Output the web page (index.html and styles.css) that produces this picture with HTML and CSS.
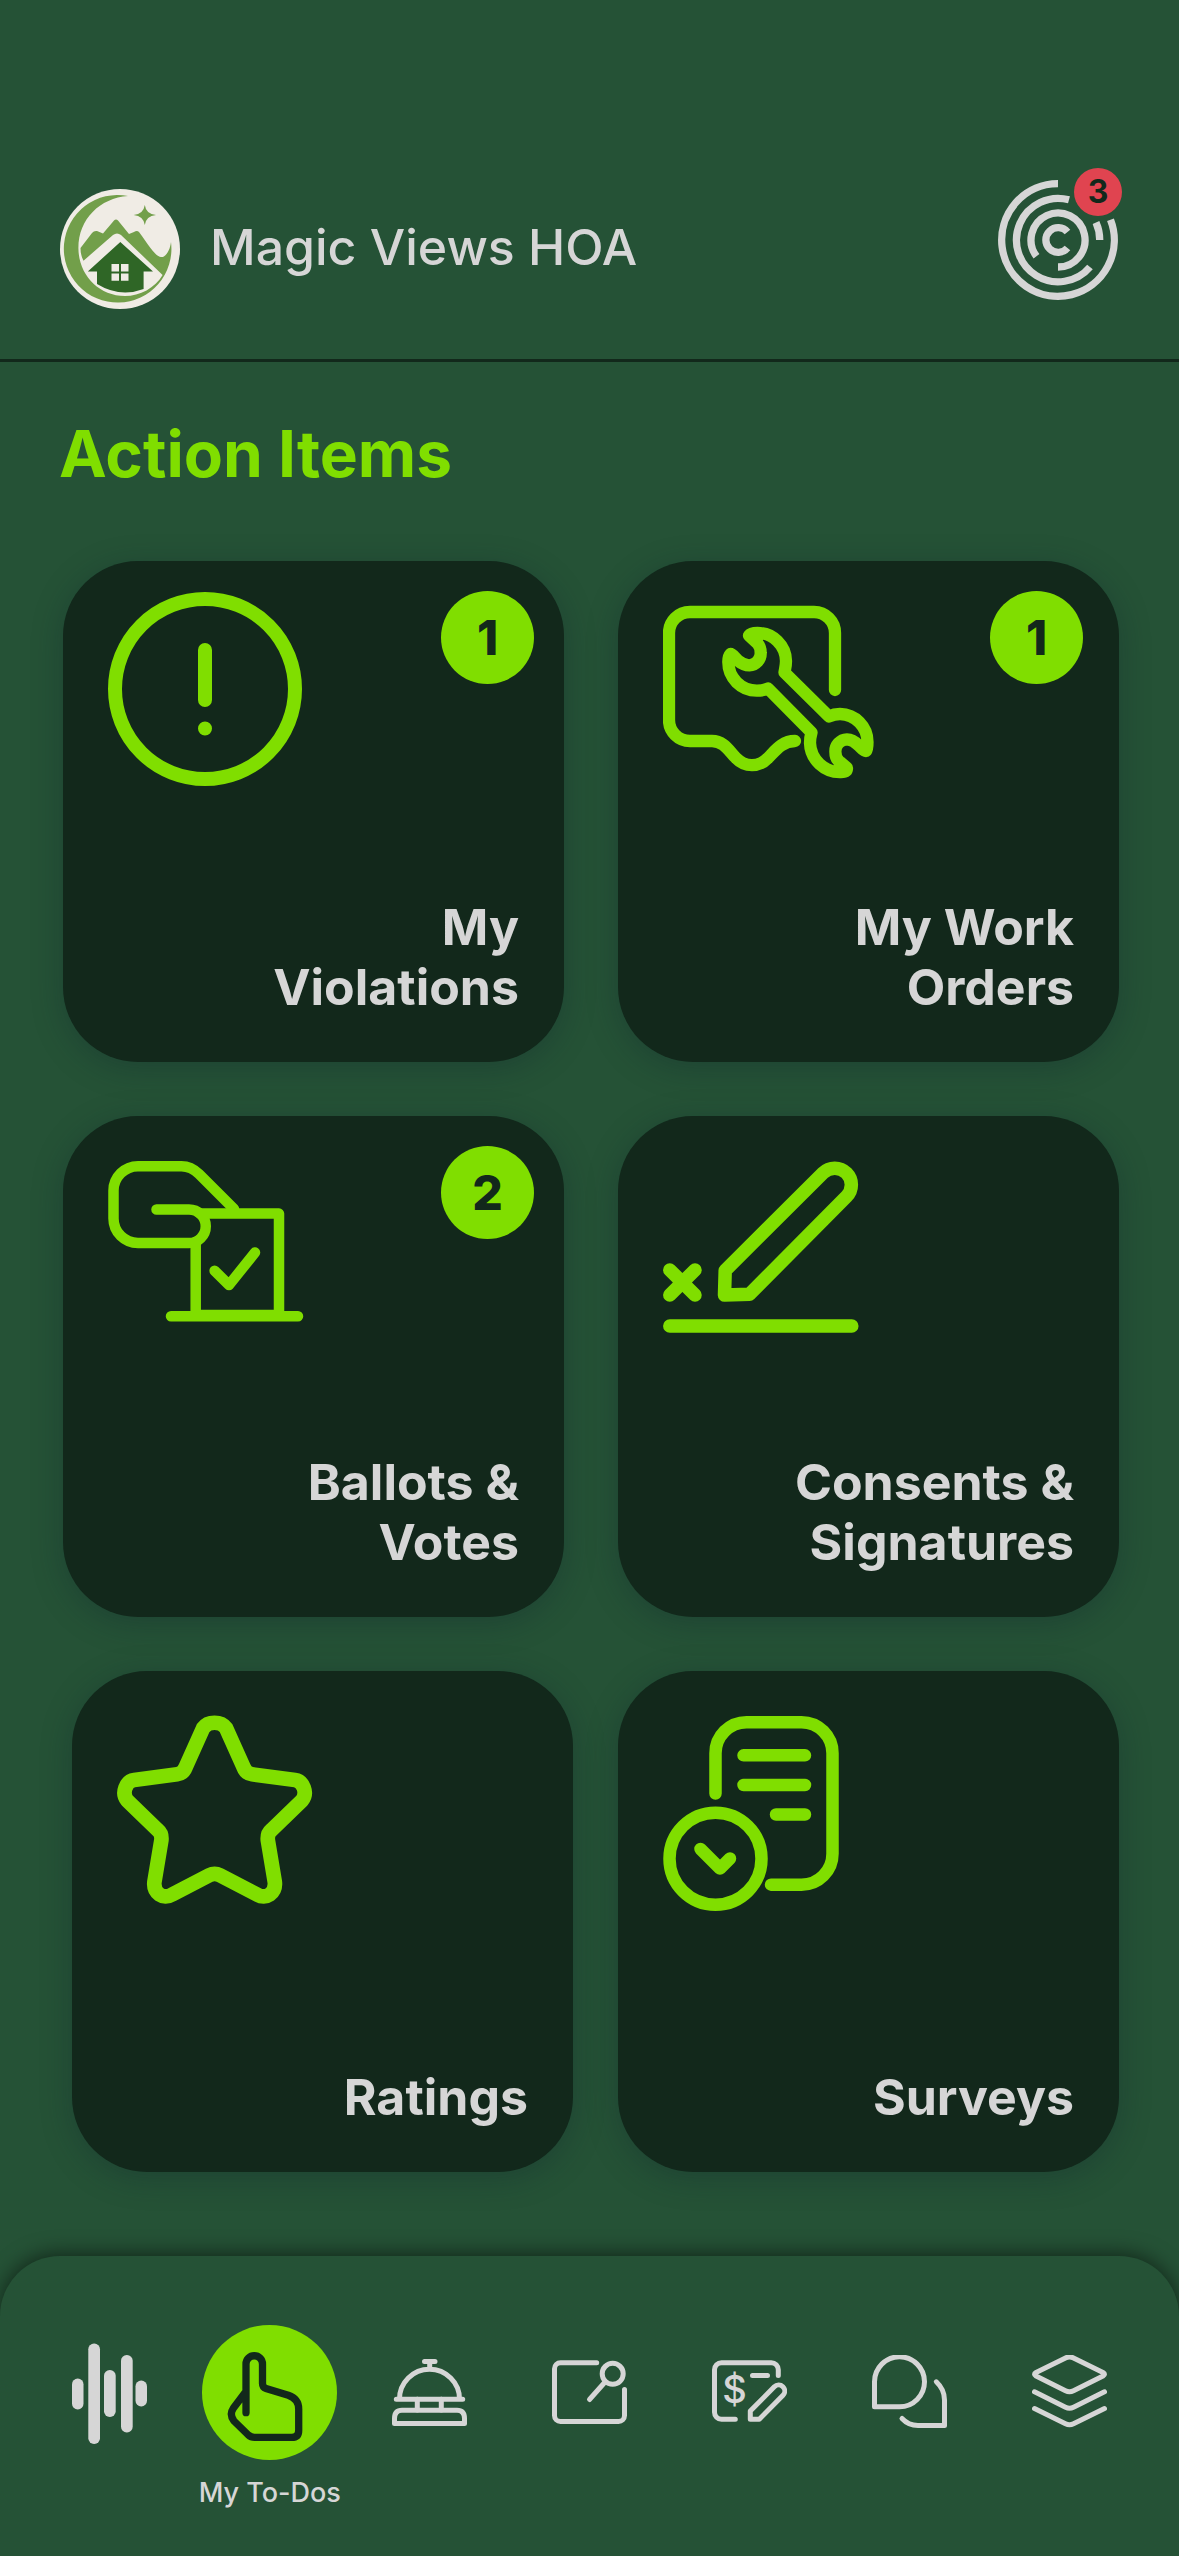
FILE: index.html
```html
<!DOCTYPE html>
<html lang="en">
<head>
    <meta charset="UTF-8">
    <meta name="viewport" content="width=device-width, initial-scale=1">
    <title>My To-Dos</title>
    <link rel="stylesheet" href="styles.css">
</head>
<body>
<header class="header">
    <div class="brand">
        <svg class="brand-logo" viewBox="0 0 120 120" aria-hidden="true">
            <circle cx="60" cy="60" r="60" fill="#f0ece5"/>
            <path fill="#729f4a" d="M68 7A53.8 53.8 0 1 0 111 53C110 62 105 69 101 68C95 67 90 58 79 43Q77 41 74 43L69 45 58 31.5Q56 29.5 54 31.5L43 44.5 37 42Q34 41.5 32 44L20.5 59C20.5 64 21.5 68 23.5 71.7L53 46Q57 43 61 46L102.6 86C95 99 80 107 65 107C38 107 18.4 85 18.4 59C18.4 30 40 9 68 7Z"/>
            <path fill="#729f4a" d="M84.8 16Q86 25 96 26Q86 27 84.8 36Q83.5 27 73.7 26Q83.5 25 84.8 16Z"/>
            <path fill="#2f6626" d="M60.3 53 93 82.5H83.6V100Q60 109 37 95V82.5H27.8Z"/>
            <path fill="#f0ece5" d="M51.5 75h7.5v7.5h-7.5zM61 75h7.5v7.5h-7.5zM51.5 84.5h7.5v7.2h-7.5zM61 84.5h7.5v7.2h-7.5z"/>
        </svg>
        <h1 class="brand-name">Magic Views HOA</h1>
    </div>
    <button class="alerts" type="button" aria-label="Notifications">
        <svg class="alerts-icon" viewBox="-60 -60 120 120">
            <path d="M0-56.3A56.3 56.3 0 1 0 52.5-20.3"/>
            <path d="M11-40.2A41.7 41.7 0 1 0 32 27M38-17.5A41.7 41.7 0 0 1 41.7 0"/>
            <path d="M0 27A27 27 0 1 0-21.5 16.3"/>
            <path d="M9.5-8A12.3 12.3 0 1 0 9.5 8"/>
        </svg>
        <span class="alerts-count">3</span>
    </button>
</header>

<main class="content">
    <h2 class="section-title">Action Items</h2>
    <div class="rows">
        <div class="row">
            <a class="card" href="#violations">
                <svg class="card-icon" viewBox="0 0 225 210" stroke-width="14">
                    <circle cx="97" cy="98" r="90"/>
                    <path d="M97 59v50M97 137.5v.01"/>
                </svg>
                <span class="badge">1</span>
                <span class="card-label">My<br>Violations</span>
            </a>
            <a class="card" href="#work-orders">
                <svg class="card-icon" viewBox="0 0 225 210" stroke-width="12.3">
                    <path d="M172 99V42a21 21 0 0 0-21-21H27A21 21 0 0 0 6 42v87a21 21 0 0 0 21 21h22C61 150 66 160 73 167C82 176.5 96 176.5 105 167C112 160 119 150 132 150"/>
                    <path d="M86 44.5C88 42 92 42 94.5 42A28.5 28.5 0 0 1 123 70C123 75 122 78 121.5 81.5L166 125.5C169 124 173 123 177 123A28 28 0 0 1 204.5 151C204.5 155 204.5 158 203 160C200 160 198 156 195 154C191 149.5 188 148.3 184 148.3A12 12 0 0 0 172.4 161C172.4 166 174 169 177 171L184 177C184 180 182 181 178 181A30 30 0 0 1 147 152C147 148 147.5 145 148.5 141.5L105 97.5C102 99 98 99.6 94 99.6A28.5 28.5 0 0 1 65.3 71C65.3 68 65.5 65 67.5 63C70 63 72 67 75.5 70C79 73 82 74.3 86.3 74.3A12 12 0 0 0 97.7 62C97.7 58 97 55 94.4 52.3Z"/>
                </svg>
                <span class="badge badge-inset">1</span>
                <span class="card-label">My Work<br>Orders</span>
            </a>
        </div>
        <div class="row">
            <a class="card" href="#ballots">
                <svg class="card-icon" viewBox="0 0 225 210" stroke-width="10.5">
                    <path d="M48.5 63.5H81a16.7 16.7 0 0 1 0 33.5H30A24.5 24.5 0 0 1 5.5 72.5v-28A24.5 24.5 0 0 1 30 20.2H73.5Q83 20.2 91 28L126 63"/>
                    <path d="M92 67.6h79V169H87.7V97M63 170.3h127"/>
                    <path d="M106.6 124.7 121 139l26-32.5"/>
                </svg>
                <span class="badge">2</span>
                <span class="card-label">Ballots &amp;<br>Votes</span>
            </a>
            <a class="card" href="#consents">
                <svg class="card-icon" viewBox="0 0 225 210" stroke-width="13.5">
                    <path d="M6.8 124 32 149M32 124 6.8 149M6.8 180h182"/>
                    <path d="M61.5 149 62.2 124.5 160 27A16.5 16.5 0 0 1 183.5 50.5L86.5 148.3Z"/>
                </svg>
                <span class="card-label">Consents &amp;<br>Signatures</span>
            </a>
        </div>
        <div class="row row-last">
            <a class="card" href="#ratings">
                <svg class="card-icon" viewBox="0 0 225 210" stroke-width="14.7">
                    <path d="M109 27L126.5 66Q129 72.5 135 73.3L178 79C186 80 191 92 185 99.5L154 129.5Q150.3 132.5 150.8 139L157.8 181C159 192 149 199 140 193.5L103 174.3Q97.6 171.5 92.2 174.3L55.2 193.5C46.2 199 36.2 192 37.4 181L44.4 139Q44.9 132.5 41.2 129.5L10.2 99.5C4.2 92 9.2 80 17.2 79L60.2 73.3Q66.2 72.5 68.7 66L86.2 27C91 20 104 20 109 27Z"/>
                </svg>
                <span class="card-label">Ratings</span>
            </a>
            <a class="card" href="#surveys">
                <svg class="card-icon" viewBox="0 0 225 210" stroke-width="12.5">
                    <path d="M52.5 92.5V52.2a31 31 0 0 1 31-31h55a31 31 0 0 1 31 31v100.5a31 31 0 0 1-31 31H108"/>
                    <path d="M80.5 54.3H142M80.5 84H142M113 113.5h29"/>
                    <circle cx="52.5" cy="157.7" r="46"/>
                    <path d="M37.5 148 57 167.5 67 157.5"/>
                </svg>
                <span class="card-label">Surveys</span>
            </a>
        </div>
    </div>
</main>

<nav class="tabs">
    <a class="tab" href="#feed" aria-label="Feed">
        <span class="tab-icon">
            <svg class="wave" viewBox="0 0 75 105">
                <rect x="0" y="38.5" width="11.5" height="31" rx="5.7"/>
                <rect x="16.3" y="3.5" width="11.7" height="100.5" rx="5.7"/>
                <rect x="32" y="30" width="11.7" height="47" rx="5.7"/>
                <rect x="49" y="15" width="11.7" height="77.5" rx="5.7"/>
                <rect x="63.5" y="40.5" width="11.5" height="26" rx="5.7"/>
            </svg>
        </span>
    </a>
    <a class="tab" href="#todos" aria-current="page">
        <span class="tab-icon tab-icon-active">
            <svg class="hand" viewBox="0 0 135 135">
                <path d="M44 87.7V39a8.2 8.2 0 0 1 16.5 0V58.5Q60.5 62.3 64 63.4L86.3 70.3Q96.7 74 96.7 84V105.5Q96.7 112.4 89.7 112.4H52.5Q49 112.4 46.3 110L32 96Q27 89.5 31.3 83.3L43 67.7"/>
            </svg>
        </span>
        <span class="tab-label">My To-Dos</span>
    </a>
    <a class="tab" href="#concierge" aria-label="Concierge">
        <span class="tab-icon">
            <svg viewBox="0 0 75 75">
                <path d="M32.5 6.5h10.5M37.7 6.5V13M7.5 44A30 29.8 0 0 1 67.5 44M4.3 44.2H70.7M25.3 44v11M49.3 44v11"/>
                <path d="M2.5 68.5V63.5Q2.5 55.2 10 55.2H65Q72.5 55.2 72.5 63.5V68.5Z"/>
            </svg>
        </span>
    </a>
    <a class="tab" href="#board" aria-label="Board">
        <span class="tab-icon">
            <svg viewBox="0 0 75 75">
                <path d="M44.7 7.8H8.5a6 6 0 0 0-6 6V60.5a6 6 0 0 0 6 6H66.5a6 6 0 0 0 6-6V34.5"/>
                <circle cx="60.7" cy="18.8" r="10.5"/>
                <path d="M53.5 26.5 37.5 44.5"/>
            </svg>
        </span>
    </a>
    <a class="tab" href="#payments" aria-label="Payments">
        <span class="tab-icon">
            <svg viewBox="0 0 75 75">
                <path d="M66.3 20.5V14.8a7 7 0 0 0-7-7H9.5a7 7 0 0 0-7 7V57.2a7 7 0 0 0 7 7H23.3M40.5 20.5h15"/>
                <path d="M38.3 64.2V56L62.3 31.8A6 6 0 0 1 71 40.3L47.3 64.2Z"/>
                <text class="dollar" x="22.5" y="48">$</text>
            </svg>
        </span>
    </a>
    <a class="tab" href="#messages" aria-label="Messages">
        <span class="tab-icon">
            <svg viewBox="0 0 75 75">
                <path d="M2.5 51.8V26.8a25 25 0 1 1 25 25Z"/>
                <path d="M64.3 26.8Q72.5 34.5 72.5 45V70.5H46Q36.5 70.5 30 63.5"/>
            </svg>
        </span>
    </a>
    <a class="tab" href="#more" aria-label="More">
        <span class="tab-icon">
            <svg viewBox="0 0 75 75">
                <path d="M33.5 3Q37.5 1 41.5 3L71 17.5Q74 19.2 71 21L41.5 35.8Q37.5 37.8 33.5 35.8L4 21Q1 19.2 4 17.5Z"/>
                <path d="M2.5 36.8 33.5 52.2Q37.5 54.2 41.5 52.2L72.5 36.8M2.5 53.5 33.5 68.8Q37.5 70.8 41.5 68.8L72.5 53.5"/>
            </svg>
        </span>
    </a>
</nav>
</body>
</html>
```

FILE: styles.css
```css
* {
    box-sizing: border-box;
}

body {
    margin: 0;
    min-height: 100vh;
    display: flex;
    flex-direction: column;
    font-family: Inter, "Liberation Sans", sans-serif;
    background-color: #255236;
    color: #d6d6d6;
}

a {
    color: inherit;
    text-decoration: none;
}

/* header */
.header {
    display: flex;
    justify-content: space-between;
    align-items: flex-start;
    padding: 180px 61px 50px 60px;
    border-bottom: 3px solid #12281b;
}

.brand {
    display: flex;
    align-items: center;
    gap: 30px;
    padding-top: 9px;
}

.brand-logo {
    width: 120px;
    height: 120px;
}

.brand-name {
    margin: 0;
    padding-bottom: 4px;
    font-size: 50px;
    line-height: 60px;
    font-weight: 500;
}

.alerts {
    position: relative;
    padding: 0;
    border: 0;
    background: none;
    font-family: inherit;
}

.alerts-icon {
    display: block;
    width: 120px;
    height: 120px;
    fill: none;
    stroke: #d6d6d6;
    stroke-width: 7.3;
}

.alerts-count {
    position: absolute;
    top: -12px;
    right: -4px;
    width: 48px;
    height: 48px;
    border-radius: 50%;
    background-color: #e04450;
    color: #12281b;
    font-size: 32px;
    line-height: 48px;
    font-weight: 700;
    text-align: center;
}

/* cards */
.content {
    padding: 56px 0 84px;
}

.section-title {
    margin: 0 60px 71px 59px;
    font-size: 64px;
    line-height: 72px;
    font-weight: 700;
    color: #80de00;
}

.rows {
    display: flex;
    flex-direction: column;
    gap: 54px;
}

.row {
    display: flex;
    gap: 54px;
    padding: 0 60px 0 63px;
}

.row-last {
    gap: 45px;
    padding-left: 72px;
}

.card {
    position: relative;
    flex: 1;
    aspect-ratio: 1;
    display: flex;
    flex-direction: column;
    justify-content: space-between;
    padding: 30px 45px 45px;
    border-radius: 75px;
    background-color: #12281b;
    box-shadow: 0 6px 30px rgba(18, 40, 45, 0.35);
}

.card-icon {
    width: 225px;
    height: 210px;
    fill: none;
    stroke: #80de00;
    stroke-linecap: round;
    stroke-linejoin: round;
}

.card-label {
    font-size: 50px;
    line-height: 60px;
    font-weight: 700;
    text-align: right;
}

.badge {
    position: absolute;
    top: 30px;
    right: 30px;
    width: 93px;
    height: 93px;
    border-radius: 50%;
    background-color: #80de00;
    color: #12281b;
    font-size: 48px;
    line-height: 93px;
    font-weight: 800;
    text-align: center;
}

.badge-inset {
    right: 36px;
}

/* bottom tabs */
.tabs {
    flex: 1;
    display: flex;
    padding: 69px 30px 30px;
    border-radius: 60px 60px 0 0;
    background-color: #255236;
    box-shadow: 0 -3px 20px rgba(0, 0, 0, 0.5);
}

.tab {
    flex: 1;
    display: flex;
    flex-direction: column;
    align-items: center;
    gap: 16px;
}

.tab-icon {
    display: flex;
    justify-content: center;
    align-items: center;
    width: 135px;
    height: 135px;
    border-radius: 50%;
}

.tab-icon-active {
    background-color: #80de00;
}

.tab-icon svg {
    width: 75px;
    height: 75px;
    fill: none;
    stroke: #d6d6d6;
    stroke-width: 5;
    stroke-linecap: round;
    stroke-linejoin: round;
}

.tab-icon .wave {
    height: 105px;
    fill: #d6d6d6;
    stroke: none;
}

.tab-icon .hand {
    width: 135px;
    height: 135px;
    stroke: #12281b;
    stroke-width: 7.3;
}

.dollar {
    fill: #d6d6d6;
    stroke: none;
    font-size: 38px;
    font-weight: 500;
    text-anchor: middle;
}

.tab-label {
    font-size: 27px;
    line-height: 34px;
    font-weight: 500;
    white-space: nowrap;
}
```
